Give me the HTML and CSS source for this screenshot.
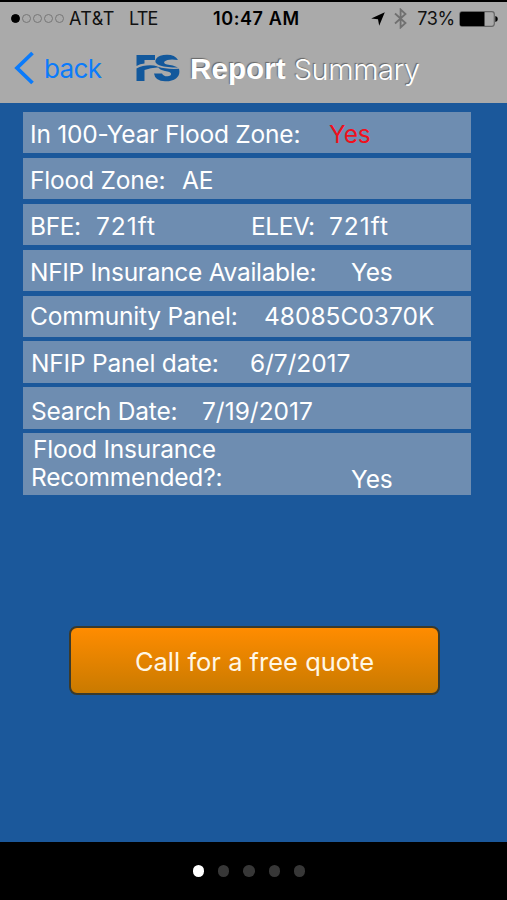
FILE: index.html
```html
<!DOCTYPE html>
<html lang="en">
<head>
    <meta charset="UTF-8">
    <meta name="viewport" content="width=device-width, initial-scale=1.0">
    <title>Report Summary</title>
    <link rel="stylesheet" href="styles.css">
</head>
<body>
    <header class="header">
        <div class="status-bar">
            <div class="status-left">
                <span class="signal"><i class="full"></i><i></i><i></i><i></i><i></i></span>
                <span class="carrier">AT&amp;T</span>
                <span class="network">LTE</span>
            </div>
            <div class="clock">10:47 AM</div>
            <div class="status-right">
                <svg class="location" width="14" height="14" viewBox="0 0 14 14"><path d="M13.8 0.200L8.200 13.800L7 7.300L0.200 6.500Z" fill="#000"/></svg>
                <svg class="bluetooth" width="13" height="21" viewBox="0 0 13 21"><path d="M1 5.500L11.500 15L6.600 19.500V1.500L11.500 6L1 15.500" fill="none" stroke="#707070" stroke-width="1.800"/></svg>
                <span class="percent">73%</span>
                <svg class="battery" width="39" height="16" viewBox="0 0 39 16">
                    <rect x="0.7" y="0.7" width="34.6" height="14.6" rx="2.5" fill="none" stroke="#666" stroke-width="1.2"/>
                    <path d="M2.5 1H25.500V15H2.500Q1 15 1 13.500V2.500Q1 1 2.500 1Z" fill="#000"/>
                    <path d="M36.300 5Q38.800 5.500 38.800 8T36.300 11Z" fill="#000"/>
                </svg>
            </div>
        </div>
        <nav class="nav-bar">
            <a class="back" href="#">
                <svg width="20" height="34" viewBox="0 0 20 34"><path d="M18.500 2L3 17L18.500 32" fill="none" stroke="#0b7bfb" stroke-width="3.800"/></svg>
                <span>back</span>
            </a>
            <svg class="logo" width="44" height="28" viewBox="0 0 44 28" fill="#12589c">
                <path d="M0.500 1H19V6H8.500V9.500Q4 9.800 0.500 12Z"/>
                <path d="M0.500 14.500Q8 10.500 18 11.500Q21 12 23 13.500Q16 13 8.500 16V27H0.500Z"/>
                <path d="M42 6Q32 4.500 28.500 7.500Q27 9.500 31 10.500Q37 11 42 13.500Q31 13.500 24 11.500Q17.500 9 20 5Q23 0.800 31 0.800Q39 0.800 42 6Z"/>
                <path d="M22 12.800Q30 15.500 43 14.800Q44.500 21 40 24.500Q36 27.500 29 27.300Q19 27 18 19.500H26Q27.500 22.500 31.500 22.300Q35.500 22 35 19.500Q34.500 17.800 29 17Q23.500 16 22 12.800Z"/>
            </svg>
            <h1 class="title"><b>Report</b> <span>Summary</span></h1>
        </nav>
    </header>

    <main class="report">
        <ul class="rows">
            <li class="row zone-100"><span class="label">In 100-Year Flood Zone:</span><span class="value alert">Yes</span></li>
            <li class="row zone"><span class="label">Flood Zone:</span><span class="value">AE</span></li>
            <li class="row bfe"><span class="label">BFE:</span><span class="value">721ft</span><span class="label">ELEV:</span><span class="value">721ft</span></li>
            <li class="row available"><span class="label">NFIP Insurance Available:</span><span class="value">Yes</span></li>
            <li class="row community"><span class="label">Community Panel:</span><span class="value">48085C0370K</span></li>
            <li class="row panel-date"><span class="label">NFIP Panel date:</span><span class="value">6/7/2017</span></li>
            <li class="row search-date"><span class="label">Search Date:</span><span class="value">7/19/2017</span></li>
            <li class="row recommended"><span class="label"><span class="first-line">Flood Insurance</span><br>Recommended?:</span><span class="value">Yes</span></li>
        </ul>
        <button class="call-button">Call for a free quote</button>
    </main>

    <footer class="pager">
        <span class="dot active"></span>
        <span class="dot"></span>
        <span class="dot"></span>
        <span class="dot"></span>
        <span class="dot"></span>
    </footer>
</body>
</html>
```
FILE: styles.css
```css
* {
    box-sizing: border-box;
}
body {
    margin: 0;
    height: 900px;
    display: flex;
    flex-direction: column;
    overflow: hidden;
    background: #1b589b;
    color: #fff;
    font-family: Inter, "Liberation Sans", sans-serif;
}
.header {
    height: 103px;
    background: #aaa;
    border-top: 2px solid #000;
}
.status-bar {
    display: grid;
    grid-template-columns: 202px 109px 1fr;
    align-items: center;
    height: 33px;
    padding: 0 9px 0 11px;
    color: #111;
    font-size: 18px;
}
.status-left, .status-right {
    display: flex;
    align-items: center;
}
.signal {
    display: flex;
    gap: 2px;
    margin-right: 5px;
}
.signal i {
    width: 9px;
    height: 9px;
    border: 1px solid #777;
    border-radius: 50%;
}
.signal .full {
    background: #000;
    border-color: #000;
}
.carrier {
    width: 60px;
    letter-spacing: 0.4px;
}
.network {
    letter-spacing: -0.8px;
}
.clock {
    font-weight: 600;
    color: #000;
    white-space: nowrap;
    letter-spacing: 0.6px;
}
.status-right {
    justify-content: flex-end;
}
.bluetooth {
    margin: 0 10px 0 9px;
}
.percent {
    letter-spacing: -0.3px;
    margin-right: 4px;
}
.nav-bar {
    display: flex;
    align-items: center;
    height: 66px;
    padding-left: 14px;
}
.back {
    display: flex;
    align-items: center;
    width: 122px;
    gap: 10px;
    color: #0b7bfb;
    font-size: 26px;
    letter-spacing: -0.6px;
    text-decoration: none;
}
.title {
    display: flex;
    gap: 8px;
    margin: 2px 0 0 10px;
    font-family: "Liberation Sans", Arial, sans-serif;
    font-size: 29.7px;
    font-weight: normal;
    text-shadow: -1px -1px 1px #666;
}
.title span {
    font-family: Inter, sans-serif;
    font-weight: 300;
    font-size: 29px;
    letter-spacing: -0.4px;
}
.report {
    flex: 1;
    padding: 9px 36px 0 23px;
}
.rows {
    display: flex;
    flex-direction: column;
    gap: 4.6px;
    height: 383px;
    margin: 0;
    padding: 0;
    list-style: none;
}
.row {
    display: flex;
    flex: none;
    align-items: center;
    height: 41.3px;
    padding: 3px 0 0 7px;
    background: #6e8db1;
    font-size: 24.5px;
    line-height: 28px;
    white-space: nowrap;
}
.label {
    flex: none;
    letter-spacing: -0.2px;
}
.value {
    flex: none;
    letter-spacing: -0.1px;
}
.alert {
    color: #f0101c;
}
.zone-100 .label {
    width: 299px;
}
.zone .label {
    width: 152px;
}
.bfe .label {
    width: 66px;
    letter-spacing: -0.4px;
}
.bfe .value {
    width: 155px;
    letter-spacing: 1px;
}
.bfe .value + .label {
    width: 78px;
}
.bfe .label + .value:last-child {
    width: auto;
}
.available .label {
    width: 321px;
    letter-spacing: -0.3px;
}
.community {
    padding-top: 0;
}
.community .label {
    width: 234px;
}
.community .value, .search-date .value {
    letter-spacing: 0;
}
.panel-date .label {
    width: 219px;
}
.search-date .label {
    width: 171px;
}
.panel-date, .search-date, .recommended {
    padding-left: 8px;
}
.panel-date {
    padding-top: 2px;
}
.search-date {
    padding-top: 6px;
}
.recommended {
    height: 62px;
    padding-top: 0;
    align-items: flex-end;
    padding-bottom: 2px;
}
.recommended .label {
    width: 320px;
    padding-bottom: 2px;
}
.first-line {
    padding-left: 2px;
}
.call-button {
    display: block;
    width: 371px;
    height: 69px;
    margin: 131px 0 0 46px;
    padding: 1px 0 0;
    border: 2px solid #3a3a2c;
    border-radius: 8px;
    background: linear-gradient(#ff8c00, #c97a00);
    color: #fff7e6;
    font-family: inherit;
    font-size: 25.5px;
}
.pager {
    display: flex;
    justify-content: center;
    align-items: center;
    gap: 14px;
    height: 58px;
    padding-right: 9px;
    background: #000;
}
.dot {
    width: 11.4px;
    height: 11.4px;
    border-radius: 50%;
    background: #373737;
}
.dot.active {
    background: #fff;
}
```
